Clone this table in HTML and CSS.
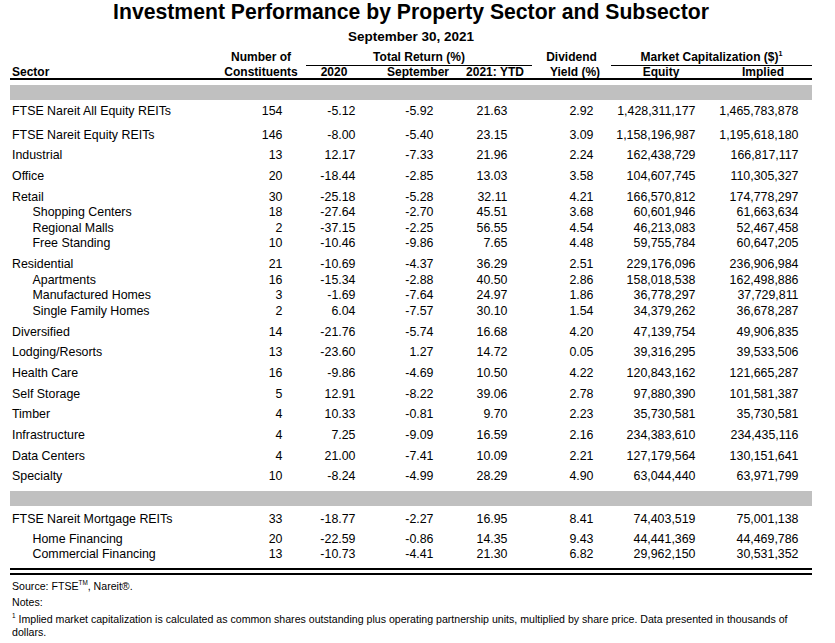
FILE: index.html
```html
<!DOCTYPE html>
<html lang="en">
<head>
<meta charset="utf-8">
<title>Investment Performance by Property Sector and Subsector</title>
<link rel="stylesheet" href="styles.css">
</head>
<body>
<div class="page">
  <h1 class="title">Investment Performance by Property Sector and Subsector</h1>
  <div class="subtitle">September 30, 2021</div>

  <div class="head">
    <div class="head-top">
      <div></div>
      <div>Number of</div>
      <div></div>
      <div class="rule">Total Return (%)</div>
      <div>Dividend</div>
      <div class="rule">Market Capitalization ($)<span class="sup">1</span></div>
    </div>
    <div class="head-bottom">
      <div class="sector">Sector</div>
      <div>Constituents</div>
      <div>2020</div>
      <div>September</div>
      <div>2021: YTD</div>
      <div>Yield (%)</div>
      <div>Equity</div>
      <div></div>
      <div>Implied</div>
    </div>
  </div>

  <div class="band"></div>

  <div class="tbody">
    <div class="group">
      <div class="row"><span class="label">FTSE Nareit All Equity REITs</span><span>154</span><span>-5.12</span><span>-5.92</span><span>21.63</span><span>2.92</span><span>1,428,311,177</span><span>1,465,783,878</span></div>
    </div>
    <div class="group wide">
      <div class="row"><span class="label">FTSE Nareit Equity REITs</span><span>146</span><span>-8.00</span><span>-5.40</span><span>23.15</span><span>3.09</span><span>1,158,196,987</span><span>1,195,618,180</span></div>
    </div>
    <div class="group">
      <div class="row"><span class="label">Industrial</span><span>13</span><span>12.17</span><span>-7.33</span><span>21.96</span><span>2.24</span><span>162,438,729</span><span>166,817,117</span></div>
    </div>
    <div class="group">
      <div class="row"><span class="label">Office</span><span>20</span><span>-18.44</span><span>-2.85</span><span>13.03</span><span>3.58</span><span>104,607,745</span><span>110,305,327</span></div>
    </div>
    <div class="group">
      <div class="row"><span class="label">Retail</span><span>30</span><span>-25.18</span><span>-5.28</span><span>32.11</span><span>4.21</span><span>166,570,812</span><span>174,778,297</span></div>
      <div class="row sub"><span class="label">Shopping Centers</span><span>18</span><span>-27.64</span><span>-2.70</span><span>45.51</span><span>3.68</span><span>60,601,946</span><span>61,663,634</span></div>
      <div class="row sub"><span class="label">Regional Malls</span><span>2</span><span>-37.15</span><span>-2.25</span><span>56.55</span><span>4.54</span><span>46,213,083</span><span>52,467,458</span></div>
      <div class="row sub"><span class="label">Free Standing</span><span>10</span><span>-10.46</span><span>-9.86</span><span>7.65</span><span>4.48</span><span>59,755,784</span><span>60,647,205</span></div>
    </div>
    <div class="group">
      <div class="row"><span class="label">Residential</span><span>21</span><span>-10.69</span><span>-4.37</span><span>36.29</span><span>2.51</span><span>229,176,096</span><span>236,906,984</span></div>
      <div class="row sub"><span class="label">Apartments</span><span>16</span><span>-15.34</span><span>-2.88</span><span>40.50</span><span>2.86</span><span>158,018,538</span><span>162,498,886</span></div>
      <div class="row sub"><span class="label">Manufactured Homes</span><span>3</span><span>-1.69</span><span>-7.64</span><span>24.97</span><span>1.86</span><span>36,778,297</span><span>37,729,811</span></div>
      <div class="row sub"><span class="label">Single Family Homes</span><span>2</span><span>6.04</span><span>-7.57</span><span>30.10</span><span>1.54</span><span>34,379,262</span><span>36,678,287</span></div>
    </div>
    <div class="group">
      <div class="row"><span class="label">Diversified</span><span>14</span><span>-21.76</span><span>-5.74</span><span>16.68</span><span>4.20</span><span>47,139,754</span><span>49,906,835</span></div>
    </div>
    <div class="group">
      <div class="row"><span class="label">Lodging/Resorts</span><span>13</span><span>-23.60</span><span>1.27</span><span>14.72</span><span>0.05</span><span>39,316,295</span><span>39,533,506</span></div>
    </div>
    <div class="group">
      <div class="row"><span class="label">Health Care</span><span>16</span><span>-9.86</span><span>-4.69</span><span>10.50</span><span>4.22</span><span>120,843,162</span><span>121,665,287</span></div>
    </div>
    <div class="group">
      <div class="row"><span class="label">Self Storage</span><span>5</span><span>12.91</span><span>-8.22</span><span>39.06</span><span>2.78</span><span>97,880,390</span><span>101,581,387</span></div>
    </div>
    <div class="group">
      <div class="row"><span class="label">Timber</span><span>4</span><span>10.33</span><span>-0.81</span><span>9.70</span><span>2.23</span><span>35,730,581</span><span>35,730,581</span></div>
    </div>
    <div class="group">
      <div class="row"><span class="label">Infrastructure</span><span>4</span><span>7.25</span><span>-9.09</span><span>16.59</span><span>2.16</span><span>234,383,610</span><span>234,435,116</span></div>
    </div>
    <div class="group">
      <div class="row"><span class="label">Data Centers</span><span>4</span><span>21.00</span><span>-7.41</span><span>10.09</span><span>2.21</span><span>127,179,564</span><span>130,151,641</span></div>
    </div>
    <div class="group">
      <div class="row"><span class="label">Specialty</span><span>10</span><span>-8.24</span><span>-4.99</span><span>28.29</span><span>4.90</span><span>63,044,440</span><span>63,971,799</span></div>
    </div>
  </div>

  <div class="band band-2"></div>

  <div class="tbody tbody-2">
    <div class="group">
      <div class="row"><span class="label">FTSE Nareit Mortgage REITs</span><span>33</span><span>-18.77</span><span>-2.27</span><span>16.95</span><span>8.41</span><span>74,403,519</span><span>75,001,138</span></div>
    </div>
    <div class="group tight">
      <div class="row sub"><span class="label">Home Financing</span><span>20</span><span>-22.59</span><span>-0.86</span><span>14.35</span><span>9.43</span><span>44,441,369</span><span>44,469,786</span></div>
      <div class="row sub"><span class="label">Commercial Financing</span><span>13</span><span>-10.73</span><span>-4.41</span><span>21.30</span><span>6.82</span><span>29,962,150</span><span>30,531,352</span></div>
    </div>
  </div>

  <div class="double"></div>

  <div class="notes">
    <p>Source: FTSE<span class="sup">TM</span>, Nareit®.</p>
    <p>Notes:</p>
    <p><span class="sup">1</span> <span>Implied market capitalization is calculated as common shares outstanding plus operating partnership units, multiplied by share price. Data presented in thousands of</span> <span>dollars.</span></p>
  </div>
</div>
</body>
</html>
```

FILE: styles.css
```css
body {
  margin: 0;
  background: #ffffff;
  color: #000000;
  font-family: "Liberation Sans", Arial, sans-serif;
}

.page {
  width: 802px;
  margin-left: 10px;
}

.title {
  margin: 0;
  font-size: 21.2px;
  font-weight: bold;
  line-height: 24px;
  text-align: center;
}

.subtitle {
  margin-top: 5px;
  font-size: 13.5px;
  font-weight: bold;
  line-height: 16px;
  text-align: center;
}

.head {
  margin-top: 5px;
  font-size: 12px;
  font-weight: bold;
}

.head-top {
  display: grid;
  grid-template-columns: 212px 78px 6px 226px 79px 201px;
  line-height: 14px;
}

.head-top > div {
  text-align: center;
  white-space: nowrap;
}

.head-top > .rule {
  padding-bottom: 1px;
  border-bottom: 1px solid #000;
}

.head-bottom {
  display: grid;
  grid-template-columns: 212px 78px 68px 100px 54px 106px 66px 20px 98px;
  line-height: 12px;
  border-bottom: 2px solid #000;
}

.head-bottom > div {
  justify-self: center;
  white-space: nowrap;
}

.head-bottom > .sector {
  justify-self: start;
  padding-left: 2px;
}

.sup {
  font-size: 0.6em;
  line-height: 1;
  vertical-align: top;
}

.band {
  height: 15px;
  margin-top: 5px;
  background: #c0c0c0;
}

.band-2 {
  height: 14.5px;
  margin-top: 6px;
}

.tbody {
  padding-top: 4px;
  font-size: 12.4px;
}

.tbody-2 {
  padding-top: 6.2px;
}

.group + .group {
  margin-top: 5.1px;
}

.group.wide {
  margin-top: 8px;
}

.group.tight {
  margin-top: 4.8px;
}

.row {
  display: grid;
  grid-template-columns: 202.5px 70px 73px 78px 74px 86px 102px 103px;
  line-height: 15.6px;
  text-align: right;
  white-space: nowrap;
}

.row > .label {
  padding-left: 2px;
  text-align: left;
}

.row.sub > .label {
  padding-left: 22.5px;
}

.tight .row {
  line-height: 15px;
}

.double {
  height: 3px;
  margin-top: 5.7px;
  border-top: 2px solid #000;
  border-bottom: 2px solid #000;
}

.notes {
  margin-top: 5px;
  padding-left: 2px;
  padding-right: 20px;
  font-size: 10.6px;
  line-height: 13px;
}

.notes p {
  margin: 0 0 3.5px;
}
```
